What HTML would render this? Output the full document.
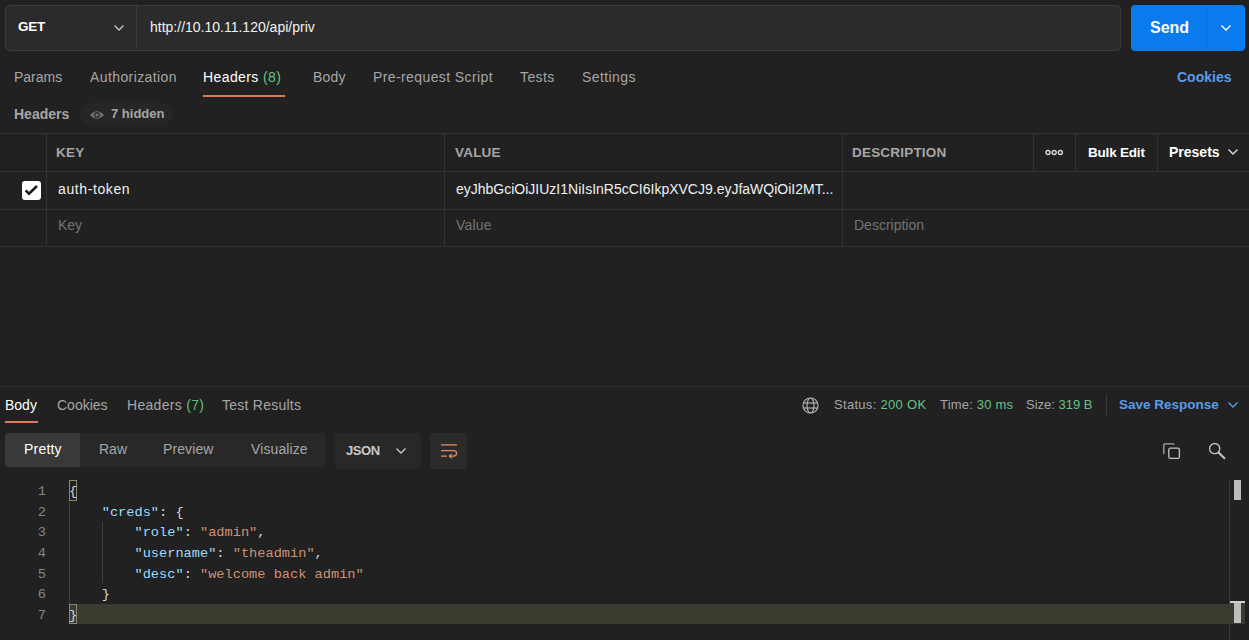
<!DOCTYPE html>
<html><head><meta charset="utf-8">
<style>
*{box-sizing:border-box;margin:0;padding:0}
html,body{width:1249px;height:640px;overflow:hidden;background:#212121}
body{position:relative;font-family:"Liberation Sans",sans-serif;color:#fff}
.a{position:absolute;white-space:nowrap}
.t{font-size:14px;line-height:16px;letter-spacing:.4px}
.g{color:#a6a6a6}
.hl{position:absolute;left:0;width:1249px;height:1px;background:#333}
.vl{position:absolute;width:1px;background:#333}
.mono{font-family:"Liberation Mono",monospace;font-size:13.65px;line-height:20.67px}
</style></head><body>

<!-- URL bar -->
<div class="a" style="left:5px;top:5px;width:1116px;height:46px;background:#2b2b2b;border:1px solid #3b3b3b;border-radius:4px"></div>
<div class="vl" style="left:136px;top:6px;height:43px;background:#3b3b3b"></div>
<div class="a" style="left:18px;top:19px;font-size:13.5px;line-height:16px;font-weight:700;letter-spacing:-.3px">GET</div>
<svg class="a" style="left:113px;top:23px" width="12" height="10" viewBox="0 0 12 10"><path d="M1.5 2.5 L6 7 L10.5 2.5" fill="none" stroke="#c8c8c8" stroke-width="1.3"/></svg>
<div class="a" style="left:150px;top:19px;font-size:14px;line-height:16px;color:#f2f2f2">http://10.10.11.120/api/priv</div>

<div class="a" style="left:1131px;top:5px;width:114px;height:46px;background:#097bed;border-radius:4px"></div>
<div class="vl" style="left:1207px;top:5px;height:46px;background:#0b72dc"></div>
<div class="a" style="left:1150px;top:19px;font-size:16px;line-height:18px;font-weight:700">Send</div>
<svg class="a" style="left:1220px;top:23px" width="12" height="10" viewBox="0 0 12 10"><path d="M1.5 2.5 L6 7 L10.5 2.5" fill="none" stroke="#fff" stroke-width="1.3"/></svg>

<!-- request tabs -->
<div class="a t g" style="left:14px;top:69px;letter-spacing:0">Params</div>
<div class="a t g" style="left:90px;top:69px">Authorization</div>
<div class="a t" style="left:203px;top:69px">Headers <span style="color:#68c384">(8)</span></div>
<div class="a t g" style="left:313px;top:69px;letter-spacing:.2px">Body</div>
<div class="a t g" style="left:373px;top:69px">Pre-request Script</div>
<div class="a t g" style="left:520px;top:69px">Tests</div>
<div class="a t g" style="left:582px;top:69px">Settings</div>
<div class="a t" style="left:1177px;top:69px;color:#5b9be8;font-weight:700;letter-spacing:0">Cookies</div>
<div class="a" style="left:203px;top:94.5px;width:82px;height:2.5px;background:#de7a58"></div>

<!-- Headers label -->
<div class="a t g" style="left:14px;top:106px;font-weight:700;letter-spacing:0">Headers</div>
<div class="a" style="left:80px;top:103px;width:93px;height:22px;background:#262626;border-radius:11px"></div>
<svg class="a" style="left:89px;top:110px" width="16" height="10" viewBox="0 0 16 10"><path d="M1 5 Q8 -2.5 15 5 Q8 12.5 1 5 Z" fill="#6e6e6e"/><circle cx="8" cy="5" r="2.3" fill="none" stroke="#262626" stroke-width="1.2"/></svg>
<div class="a g" style="left:111px;top:106px;font-size:13px;line-height:15px;font-weight:700">7 hidden</div>

<!-- table -->
<div class="hl" style="top:133px"></div>
<div class="hl" style="top:171px"></div>
<div class="hl" style="top:209px"></div>
<div class="hl" style="top:246px"></div>
<div class="vl" style="left:46px;top:133px;height:114px"></div>
<div class="vl" style="left:444px;top:133px;height:114px"></div>
<div class="vl" style="left:842px;top:133px;height:114px"></div>
<div class="vl" style="left:1033px;top:133px;height:38px"></div>
<div class="vl" style="left:1075px;top:133px;height:38px"></div>
<div class="vl" style="left:1157px;top:133px;height:38px"></div>

<div class="a g" style="left:56px;top:144.5px;font-size:13.5px;line-height:16px;font-weight:700;letter-spacing:.2px">KEY</div>
<div class="a g" style="left:455px;top:144.5px;font-size:13.5px;line-height:16px;font-weight:700;letter-spacing:.2px">VALUE</div>
<div class="a g" style="left:852px;top:144.5px;font-size:13.5px;line-height:16px;font-weight:700;letter-spacing:.2px">DESCRIPTION</div>
<svg class="a" style="left:1045px;top:148px" width="20" height="10" viewBox="0 0 20 10"><g fill="none" stroke="#d8d8d8" stroke-width="1.4"><circle cx="3" cy="4.5" r="2"/><circle cx="9.2" cy="4.5" r="2"/><circle cx="15.4" cy="4.5" r="2"/></g></svg>
<div class="a" style="left:1088px;top:144.5px;font-size:13.5px;line-height:16px;font-weight:700;letter-spacing:-.2px">Bulk Edit</div>
<div class="a" style="left:1169px;top:144px;font-size:14px;line-height:16px;font-weight:700">Presets</div>
<svg class="a" style="left:1227px;top:147px" width="12" height="10" viewBox="0 0 12 10"><path d="M1.5 2.5 L6 7 L10.5 2.5" fill="none" stroke="#e0e0e0" stroke-width="1.3"/></svg>

<div class="a" style="left:21.5px;top:180.5px;width:19px;height:19px;background:#fff;border-radius:3px"></div>
<svg class="a" style="left:21.5px;top:180.5px" width="19" height="19" viewBox="0 0 19 19"><path d="M3.6 9.4 L7 12.6 L15 5" fill="none" stroke="#1a1a1a" stroke-width="2.6"/></svg>
<div class="a t" style="left:58px;top:181px;color:#f0f0f0;letter-spacing:.6px">auth-token</div>
<div class="a t" style="left:456px;top:181px;color:#f0f0f0;letter-spacing:0">eyJhbGciOiJIUzI1NiIsInR5cCI6IkpXVCJ9.eyJfaWQiOiI2MT...</div>

<div class="a t" style="left:58px;top:217px;color:#737373;letter-spacing:0">Key</div>
<div class="a t" style="left:456px;top:217px;color:#737373;letter-spacing:.2px">Value</div>
<div class="a t" style="left:854px;top:217px;color:#737373;letter-spacing:0">Description</div>

<!-- response -->
<div class="hl" style="top:386px;background:#303030"></div>
<div class="a t" style="left:5px;top:396.5px;letter-spacing:0">Body</div>
<div class="a t g" style="left:57px;top:396.5px;letter-spacing:0">Cookies</div>
<div class="a t g" style="left:127px;top:396.5px;letter-spacing:.3px">Headers <span style="color:#5cbf78">(7)</span></div>
<div class="a t g" style="left:222px;top:396.5px;letter-spacing:.25px">Test Results</div>
<div class="a" style="left:5px;top:420.5px;width:33px;height:2.5px;background:#de7a58"></div>

<svg class="a" style="left:802px;top:396.5px" width="17" height="17" viewBox="0 0 17 17"><g fill="none" stroke="#b0b0b0" stroke-width="1.2"><circle cx="8.5" cy="8.5" r="7.5"/><ellipse cx="8.5" cy="8.5" rx="3.5" ry="7.5"/><line x1="1" y1="6" x2="16" y2="6"/><line x1="1" y1="11" x2="16" y2="11"/></g></svg>
<div class="a g" style="left:834px;top:397px;font-size:13px;line-height:15px;letter-spacing:.3px">Status: <span style="color:#68c384">200 OK</span></div>
<div class="a g" style="left:940px;top:397px;font-size:13px;line-height:15px;letter-spacing:.2px">Time: <span style="color:#68c384">30 ms</span></div>
<div class="a g" style="left:1026px;top:397px;font-size:13px;line-height:15px">Size: <span style="color:#68c384">319 B</span></div>
<div class="vl" style="left:1106px;top:394px;height:22px;background:#3a3a3a"></div>
<div class="a" style="left:1119px;top:397px;font-size:13.5px;line-height:16px;font-weight:700;color:#5b9be8">Save Response</div>
<svg class="a" style="left:1227px;top:400px" width="12" height="10" viewBox="0 0 12 10"><path d="M1.5 2.5 L6 7 L10.5 2.5" fill="none" stroke="#5b9be8" stroke-width="1.3"/></svg>

<div class="a" style="left:5px;top:433px;width:321px;height:34px;background:#282828;border-radius:4px"></div>
<div class="a" style="left:5px;top:433px;width:75px;height:34px;background:#393939;border-radius:4px 0 0 4px"></div>
<div class="a t" style="left:24px;top:441px;letter-spacing:.2px">Pretty</div>
<div class="a t g" style="left:99px;top:441px;letter-spacing:0">Raw</div>
<div class="a t g" style="left:163px;top:441px;letter-spacing:.1px">Preview</div>
<div class="a t g" style="left:251px;top:441px;letter-spacing:.1px">Visualize</div>

<div class="a" style="left:335px;top:433px;width:86px;height:36px;background:#282828;border-radius:4px"></div>
<div class="a" style="left:346px;top:442.5px;font-size:13px;line-height:15px;font-weight:700;letter-spacing:-.4px;color:#c8c8c8">JSON</div>
<svg class="a" style="left:395px;top:446px" width="12" height="10" viewBox="0 0 12 10"><path d="M1.5 2.5 L6 7 L10.5 2.5" fill="none" stroke="#c8c8c8" stroke-width="1.3"/></svg>
<div class="a" style="left:430px;top:433px;width:37px;height:36px;background:#2b2b2b;border-radius:4px"></div>
<svg class="a" style="left:440px;top:443px" width="18" height="17" viewBox="0 0 18 17"><g fill="none" stroke="#e38a62" stroke-width="1.3"><line x1="1" y1="1.9" x2="17" y2="1.9"/><path d="M1 7.6 L13.6 7.6 Q16.6 7.6 16.6 10.35 Q16.6 13.1 13.6 13.1 L9.6 13.1"/><path d="M11.8 10.9 L9.5 13.1 L11.8 15.3"/><line x1="1" y1="13.1" x2="6.8" y2="13.1"/></g></svg>

<svg class="a" style="left:1162px;top:442px" width="19" height="18" viewBox="0 0 19 18"><g fill="none" stroke="#c4c4c4" stroke-width="1.3"><rect x="6.8" y="6.2" width="10.6" height="10.1" rx="1.6"/><path d="M2.4 12 Q1.8 11.8 1.8 11 L1.8 3 Q1.8 1.8 3 1.8 L11 1.8 Q12.2 1.8 12.3 2.8" stroke="#a8a8a8"/></g></svg>
<svg class="a" style="left:1207px;top:442px" width="20" height="18" viewBox="0 0 20 18"><g fill="none" stroke="#c4c4c4" stroke-width="1.3"><circle cx="7.7" cy="6.6" r="5.1"/><line x1="11.6" y1="10.5" x2="17.4" y2="16.2" stroke-width="2" stroke-linecap="round"/></g></svg>

<!-- code -->
<div class="a" style="left:69px;top:604px;width:1160px;height:20px;background:#3c3b2f"></div>
<div class="vl" style="left:69px;top:500px;height:104px;background:#404040"></div>
<div class="vl" style="left:102px;top:522px;height:61px;background:#404040"></div>
<div class="a" style="left:69px;top:480px;width:8px;height:21px;border:1px solid #8a8a74"></div>
<div class="a" style="left:69px;top:604px;width:8px;height:20px;border:1px solid #8a8a74"></div>

<div class="a mono" style="left:20px;top:482px;width:26px;text-align:right;color:#858585">1<br>2<br>3<br>4<br>5<br>6<br>7</div>
<div class="a mono" style="left:69px;top:482px;color:#d4d4d4;white-space:pre">{
    <span style="color:#9cdcfe">"creds"</span>: {
        <span style="color:#9cdcfe">"role"</span>: <span style="color:#ce9178">"admin"</span>,
        <span style="color:#9cdcfe">"username"</span>: <span style="color:#ce9178">"theadmin"</span>,
        <span style="color:#9cdcfe">"desc"</span>: <span style="color:#ce9178">"welcome back admin"</span>
    }
}</div>

<div class="vl" style="left:1229px;top:480px;height:160px;background:#3a3a3a"></div>
<div class="a" style="left:1234px;top:480px;width:7px;height:20px;background:#bdbdbd"></div>
<div class="a" style="left:1230px;top:603px;width:15px;height:21px;background:#3c3b2f"></div>
<div class="a" style="left:1230px;top:601px;width:15px;height:2px;background:#d0d0d0"></div>
<div class="a" style="left:1234px;top:603px;width:7px;height:20px;background:#bdbdbd"></div>

</body></html>
